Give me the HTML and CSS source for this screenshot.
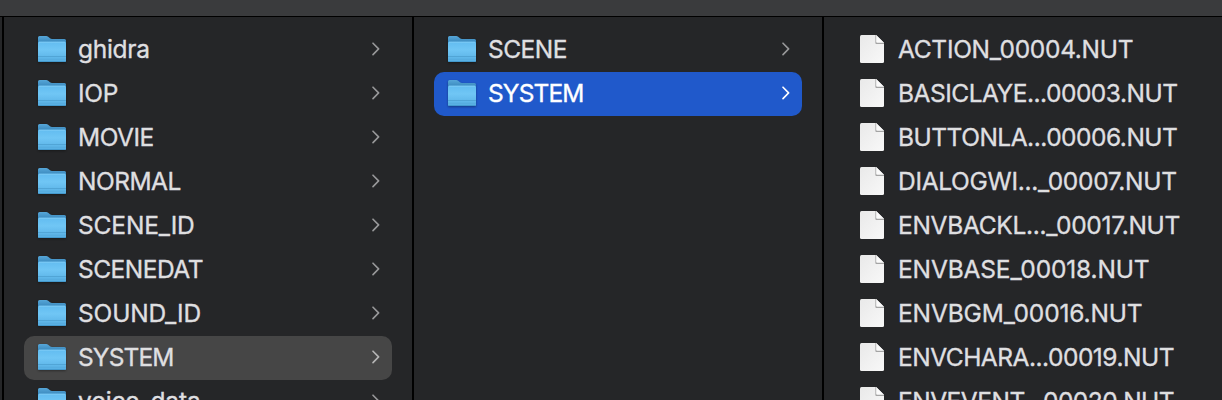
FILE: index.html
```html
<!DOCTYPE html>
<html lang="en">
<head>
<meta charset="utf-8">
<title>Finder</title>
<link rel="stylesheet" href="styles.css">
</head>
<body>
<svg class="defs" aria-hidden="true">
  <defs>
    <linearGradient id="back" x1="0" y1="0" x2="0" y2="1"><stop offset="0" stop-color="#56a6d8"/><stop offset=".3" stop-color="#3583b8"/></linearGradient>
    <linearGradient id="front" x1="0" y1="0" x2="0" y2="1"><stop offset="0" stop-color="#62bcf0"/><stop offset=".4" stop-color="#70c6f5"/><stop offset="1" stop-color="#56aee2"/></linearGradient>
    <linearGradient id="paper" x1="0" y1="0" x2="1" y2="1"><stop offset="0" stop-color="#e9e9e9"/><stop offset="1" stop-color="#f8f8f8"/></linearGradient>
    <symbol id="folder" viewBox="0 0 28 28">
      <path d="M0 2.5Q0 1 1.5 1H8.2Q9.3 1 10.2 1.8L12 3.3Q12.8 4 14 4H26.5Q28 4 28 5.5V25.5Q28 27 26.5 27H1.5Q0 27 0 25.5Z" fill="url(#back)"/>
      <path d="M0 8Q0 6.7 1.5 6.7H26.5Q28 6.7 28 8V25.5Q28 27 26.5 27H1.5Q0 27 0 25.5Z" fill="url(#front)"/>
      <path d="M1 7.2H27" stroke="#85d0f8" stroke-width=".8"/>
      <path d="M0 21.5H28" stroke="#4fa3d4" stroke-width=".9"/>
      <path d="M0 24.2H28" stroke="#55a9da" stroke-width=".7"/>
      <path d="M1 26.6H27" stroke="#3e91c4" stroke-width=".8"/>
    </symbol>
    <symbol id="file" viewBox="0 0 24 28">
      <path d="M1.5 0H16L24 8V26.5Q24 28 22.5 28H1.5Q0 28 0 26.5V1.5Q0 0 1.5 0Z" fill="url(#paper)"/>
      <path d="M15.4 0H16.2L24 7.8V9H16.4Q15.4 9 15.4 8Z" fill="#a4a4a4"/>
      <path d="M16.2 0L24 7.8H17.2Q16.2 7.8 16.2 6.8Z" fill="#fbfbfb"/>
    </symbol>
    <symbol id="chevron" viewBox="0 0 8 14">
      <path d="M1 1.2L6.6 6.9L1 12.6" fill="none" stroke="currentColor" stroke-width="1.6" stroke-linecap="round" stroke-linejoin="round"/>
    </symbol>
  </defs>
</svg>
<div class="window">
  <div class="toolbar"></div>
  <div class="browser">
    <ul class="column">
      <li class="row"><svg class="folder"><use href="#folder"/></svg><span class="name">ghidra</span><svg class="chevron"><use href="#chevron"/></svg></li>
      <li class="row"><svg class="folder"><use href="#folder"/></svg><span class="name">IOP</span><svg class="chevron"><use href="#chevron"/></svg></li>
      <li class="row"><svg class="folder"><use href="#folder"/></svg><span class="name snug">MOVIE</span><svg class="chevron"><use href="#chevron"/></svg></li>
      <li class="row"><svg class="folder"><use href="#folder"/></svg><span class="name snug">NORMAL</span><svg class="chevron"><use href="#chevron"/></svg></li>
      <li class="row"><svg class="folder"><use href="#folder"/></svg><span class="name loose">SCENE_ID</span><svg class="chevron"><use href="#chevron"/></svg></li>
      <li class="row"><svg class="folder"><use href="#folder"/></svg><span class="name snug">SCENEDAT</span><svg class="chevron"><use href="#chevron"/></svg></li>
      <li class="row"><svg class="folder"><use href="#folder"/></svg><span class="name loose">SOUND_ID</span><svg class="chevron"><use href="#chevron"/></svg></li>
      <li class="row open"><svg class="folder"><use href="#folder"/></svg><span class="name tight">SYSTEM</span><svg class="chevron"><use href="#chevron"/></svg></li>
      <li class="row"><svg class="folder"><use href="#folder"/></svg><span class="name loose">voice_data</span><svg class="chevron"><use href="#chevron"/></svg></li>
    </ul>
    <ul class="column">
      <li class="row"><svg class="folder"><use href="#folder"/></svg><span class="name snug">SCENE</span><svg class="chevron"><use href="#chevron"/></svg></li>
      <li class="row selected"><svg class="folder"><use href="#folder"/></svg><span class="name tight">SYSTEM</span><svg class="chevron"><use href="#chevron"/></svg></li>
    </ul>
    <ul class="column files">
      <li class="row"><svg class="file"><use href="#file"/></svg><span class="name">ACTION_00004.NUT</span></li>
      <li class="row"><svg class="file"><use href="#file"/></svg><span class="name snug">BASICLAYE...00003.NUT</span></li>
      <li class="row"><svg class="file"><use href="#file"/></svg><span class="name snug">BUTTONLA...00006.NUT</span></li>
      <li class="row"><svg class="file"><use href="#file"/></svg><span class="name">DIALOGWI..._00007.NUT</span></li>
      <li class="row"><svg class="file"><use href="#file"/></svg><span class="name">ENVBACKL..._00017.NUT</span></li>
      <li class="row"><svg class="file"><use href="#file"/></svg><span class="name loose">ENVBASE_00018.NUT</span></li>
      <li class="row"><svg class="file"><use href="#file"/></svg><span class="name loose">ENVBGM_00016.NUT</span></li>
      <li class="row"><svg class="file"><use href="#file"/></svg><span class="name snug">ENVCHARA...00019.NUT</span></li>
      <li class="row"><svg class="file"><use href="#file"/></svg><span class="name snug">ENVEVENT...00020.NUT</span></li>
    </ul>
  </div>
</div>
</body>
</html>
```
FILE: styles.css
```css
* { box-sizing: border-box; }
body { margin: 0; background: #252628; overflow: hidden; }
.defs { display: block; width: 0; height: 0; }
.window {
  display: flex;
  flex-direction: column;
  width: 1222px;
  height: 400px;
  overflow: hidden;
  font-family: Inter, "Liberation Sans", sans-serif;
  font-size: 24.5px;
  color: #dfdfe0;
}
.toolbar { flex: none; height: 17px; background: #3a3b3d; border-bottom: 1px solid #000; }
.browser { display: flex; flex: 1; min-height: 0; padding-left: 2px; }
.column {
  flex: none;
  width: 410px;
  margin: 0;
  padding: 11px 20px 0;
  list-style: none;
  border-left: 2px solid #000;
}
.row {
  display: flex;
  align-items: center;
  height: 44px;
  padding: 0 12.5px 2px 14px;
  border-radius: 10px;
}
.open { background: #464646; }
.selected { background: #2059cb; color: #fff; }
.folder { flex: none; width: 28px; height: 28px; filter: drop-shadow(0 1px 1px rgba(0, 0, 0, .35)); }
.file { flex: none; width: 24px; height: 28px; margin: 0 2px; }
.name {
  flex: 1;
  margin-left: 12px;
  line-height: 42px;
  white-space: nowrap;
  letter-spacing: -.3px;
  -webkit-text-stroke: .35px currentColor;
}
.snug { letter-spacing: -.5px; }
.tight { letter-spacing: -.85px; }
.loose { letter-spacing: -.15px; }
.chevron { flex: none; width: 8px; height: 14px; color: #98989a; }
.selected .chevron { color: #fff; }
.open .chevron { color: #b5b5b5; }
```
